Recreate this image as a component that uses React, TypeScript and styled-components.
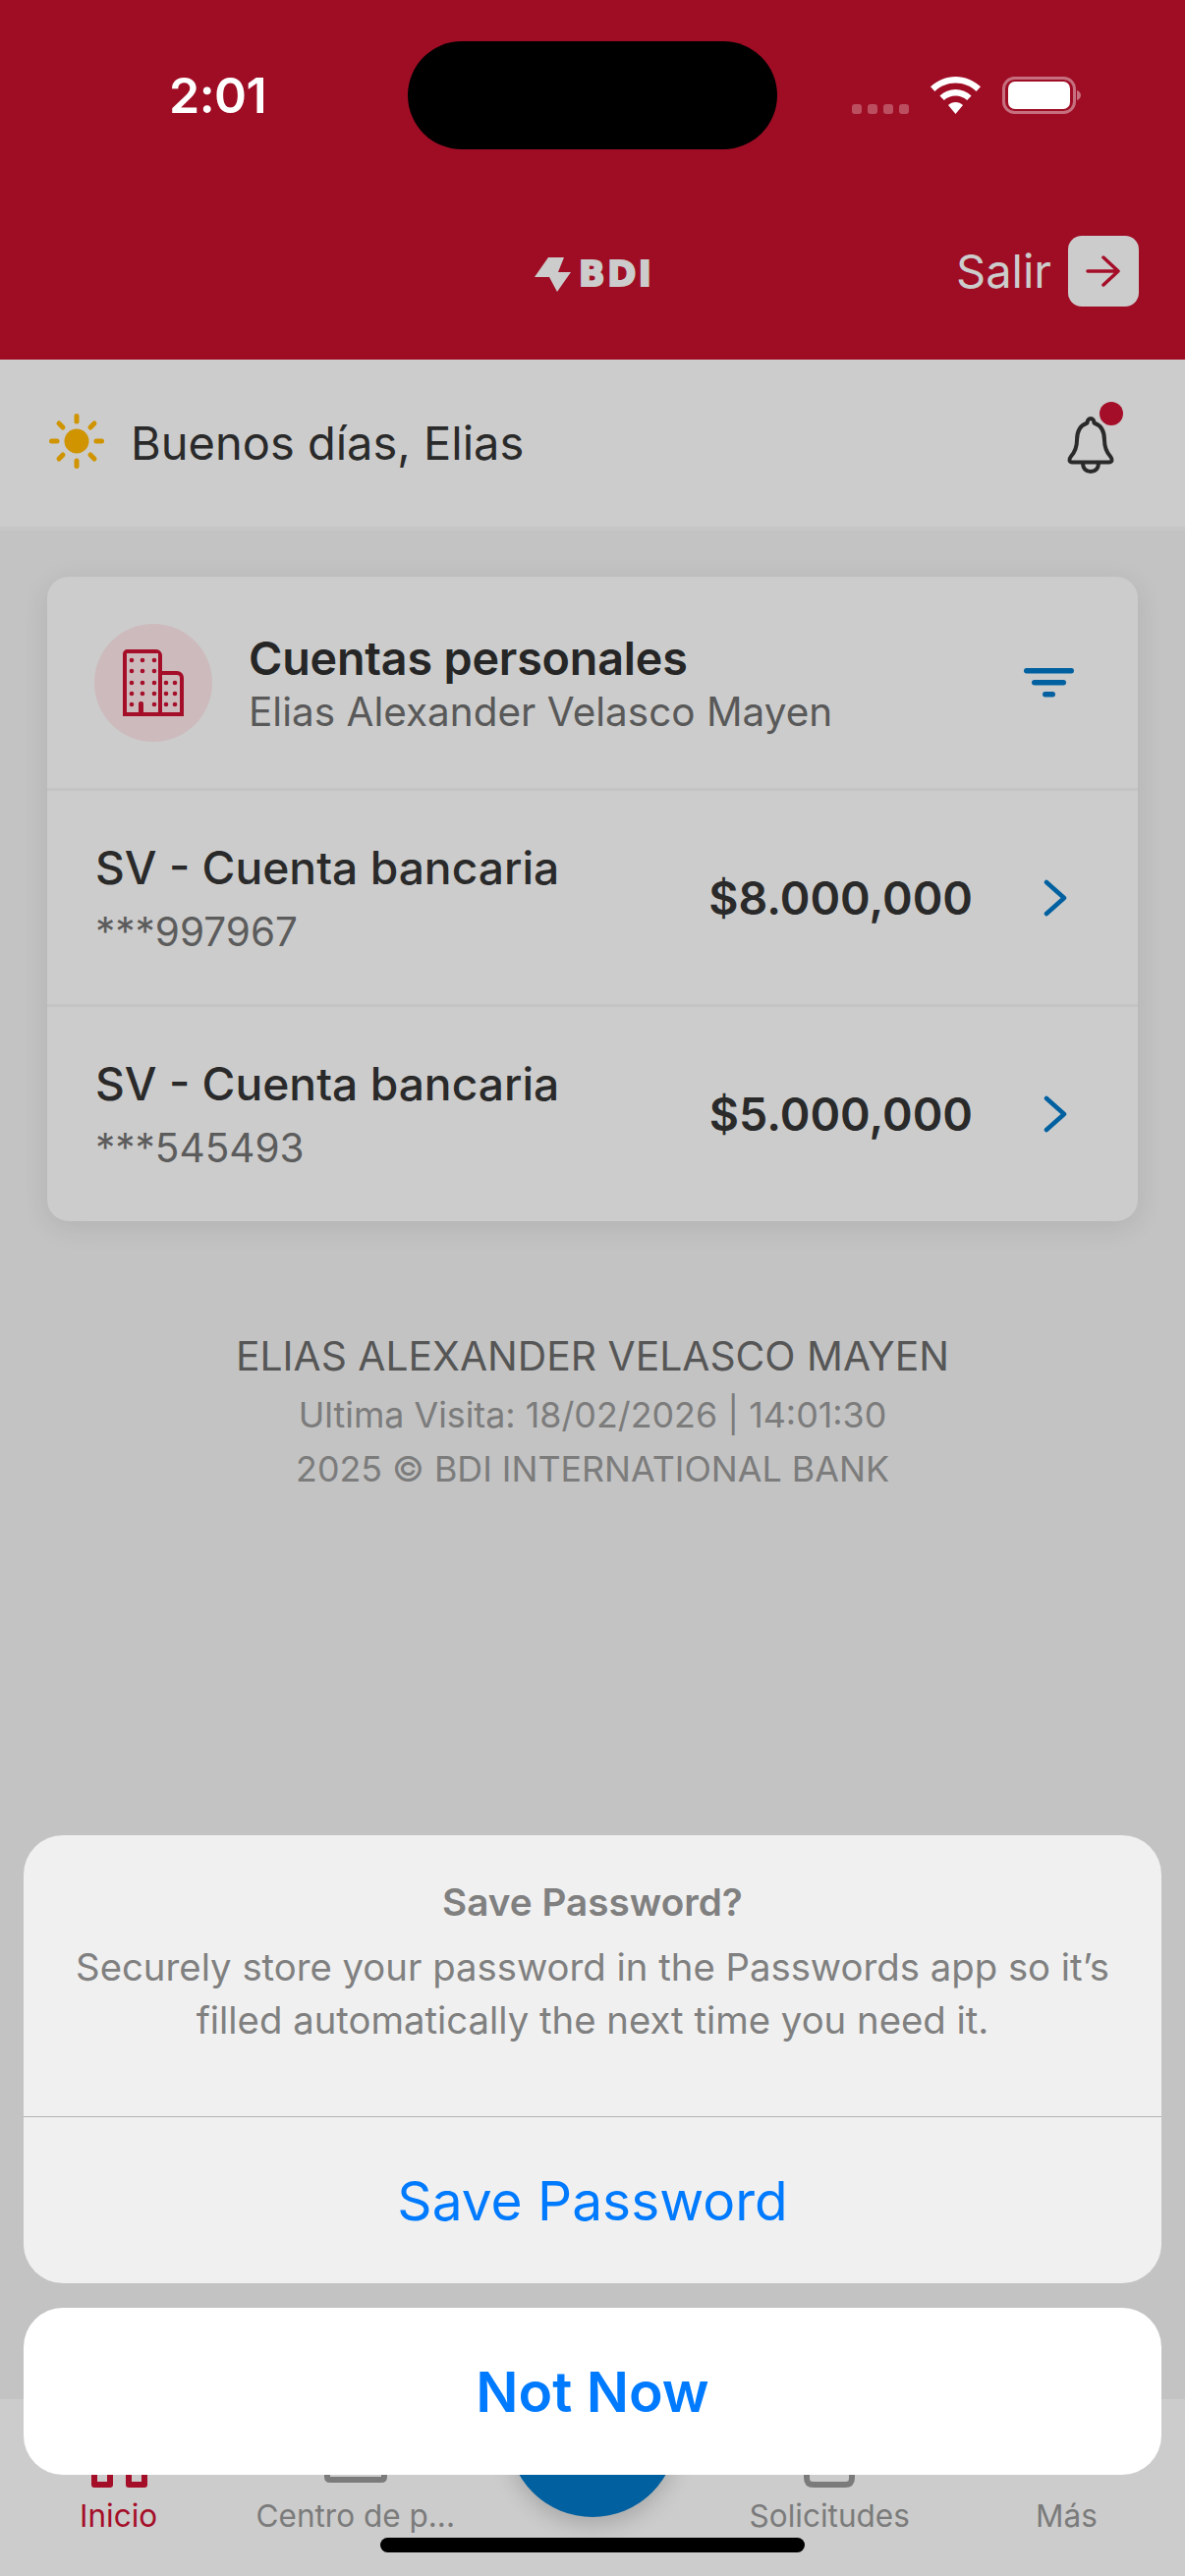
import React from 'react';
import styled, { createGlobalStyle } from 'styled-components';

const GlobalStyle = createGlobalStyle`
  html, body {
    margin: 0;
    padding: 0;
    background: #c3c3c3;
  }
  * {
    box-sizing: border-box;
  }
`;

const Page = styled.div`
  position: relative;
  display: flex;
  flex-direction: column;
  width: 1206px;
  height: 2622px;
  overflow: hidden;
  background: #c3c3c3;
  font-family: Inter, "Liberation Sans", sans-serif;
`;

const Header = styled.header`
  height: 366px;
  flex: none;
  background: #9f0d25;
`;

const StatusBar = styled.div`
  display: flex;
  justify-content: space-between;
  height: 240px;
  padding: 66px 0 0 172px;
`;

const Time = styled.span`
  font-size: 50px;
  line-height: 62px;
  font-weight: 600;
  color: #ffffff;
  letter-spacing: -0.5px;
`;

const Island = styled.div`
  position: absolute;
  left: 415px;
  top: 42px;
  width: 376px;
  height: 110px;
  border-radius: 55px;
  background: #000000;
`;

const StatusIcons = styled.div`
  display: flex;
  align-items: flex-end;
  height: 50px;
  padding-right: 106px;
`;

const SignalDots = styled.div`
  display: flex;
  gap: 6px;
  margin-right: 22px;
`;

const SignalDot = styled.span`
  width: 10px;
  height: 10px;
  border-radius: 3px;
  background: #bb4f60;
`;

const HeaderRow = styled.div`
  position: relative;
  display: flex;
  justify-content: flex-end;
  align-items: center;
  height: 72px;
  padding-right: 47px;
`;

const Logo = styled.div`
  position: absolute;
  left: 544px;
  top: 21px;
  display: flex;
  align-items: center;
  gap: 5px;
  color: #cccccc;
`;

const LogoText = styled.span`
  font-family: "DejaVu Sans", Inter, sans-serif;
  font-size: 35px;
  line-height: 36px;
  font-weight: 700;
  letter-spacing: 2.5px;
  -webkit-text-stroke: 2px #cccccc;
`;

const ExitLabel = styled.span`
  font-size: 47px;
  line-height: 56px;
  color: #cccccc;
  margin-right: 17px;
`;

const ExitButton = styled.div`
  display: flex;
  align-items: center;
  justify-content: center;
  width: 72px;
  height: 72px;
  border-radius: 14px;
  background: #cccccc;
`;

const GreetingBar = styled.div`
  display: flex;
  align-items: center;
  justify-content: space-between;
  flex: none;
  height: 174px;
  padding: 0 66px 4px 50px;
  background: #cccccc;
  border-bottom: 4px solid #c6c6c6;
`;

const Greeting = styled.div`
  display: flex;
  align-items: center;
  gap: 27px;
  font-size: 47px;
  line-height: 62px;
  color: #2a2a2a;
`;

const GreetingText = styled.span`
  position: relative;
  top: 2px;
`;

const BellWrap = styled.div`
  position: relative;
  width: 60px;
  height: 66px;
  display: flex;
  justify-content: center;
  align-items: flex-end;
`;

const BellBadge = styled.span`
  position: absolute;
  top: -7px;
  right: -3px;
  width: 24px;
  height: 24px;
  border-radius: 50%;
  background: #a50e28;
`;

const Card = styled.section`
  flex: none;
  margin: 47px 48px 0;
  border-radius: 22px;
  background: #cccccc;
  box-shadow: 0 6px 28px rgba(0, 0, 0, 0.09);
  overflow: hidden;
`;

const CardHead = styled.div`
  display: flex;
  align-items: center;
  height: 218px;
  padding: 0 65px 0 48px;
  border-bottom: 3px solid #c4c4c4;
`;

const Avatar = styled.div`
  display: flex;
  align-items: center;
  justify-content: center;
  flex: none;
  width: 120px;
  height: 120px;
  border-radius: 50%;
  background: #cdbabd;
  margin-right: 37px;
`;

const HeadText = styled.div`
  flex: 1;
  display: flex;
  flex-direction: column;
  gap: 3px;
  padding-top: 3px;
`;

const HeadTitle = styled.div`
  font-size: 46.700px;
  line-height: 54px;
  font-weight: 600;
  letter-spacing: -0.2px;
  color: #262626;
`;

const HeadSub = styled.div`
  font-size: 40.500px;
  line-height: 50px;
  color: #595959;
`;

const AccountRow = styled.div<{ $last?: boolean }>`
  display: flex;
  align-items: center;
  height: ${p => (p.$last ? 218 : 220)}px;
  padding: 0 72px 0 49px;
  border-bottom: ${p => (p.$last ? 'none' : '3px solid #c4c4c4')};
`;

const AccountText = styled.div`
  flex: 1;
  display: flex;
  flex-direction: column;
  gap: 14px;
`;

const AccountName = styled.div`
  font-size: 46.200px;
  line-height: 56px;
  font-weight: 500;
  color: #2a2a2a;
`;

const AccountNumber = styled.div`
  font-size: 40.500px;
  line-height: 48px;
  color: #5c5c5c;
`;

const Amount = styled.div`
  font-size: 46.500px;
  line-height: 56px;
  font-weight: 600;
  color: #2a2a2a;
  margin-right: 72px;
`;

const Footer = styled.footer`
  flex: none;
  margin-top: 107px;
  text-align: center;
`;

const FooterName = styled.div`
  font-size: 40.800px;
  line-height: 60px;
  margin-bottom: 3px;
  color: #565656;
`;

const FooterLine = styled.div`
  font-size: 35.800px;
  line-height: 55px;
  color: #7c7c7c;
`;

const TabBar = styled.nav`
  position: relative;
  display: grid;
  grid-template-columns: repeat(5, 1fr);
  flex: none;
  height: 180px;
  margin-top: auto;
  background: #cccccc;
`;

const TabItem = styled.div<{ $active?: boolean }>`
  display: flex;
  flex-direction: column;
  align-items: center;
  padding-top: 30px;
  font-size: 31.500px;
  line-height: 40px;
  color: ${p => (p.$active ? '#a50e28' : '#7b7b7b')};

  svg {
    margin-bottom: 9px;
  }
`;

const Fab = styled.div`
  position: absolute;
  left: 517px;
  top: -52px;
  width: 172px;
  height: 172px;
  border-radius: 50%;
  background: #0060a0;
  box-shadow: 0 8px 22px rgba(0, 0, 0, 0.18);
`;

const HomeIndicator = styled.div`
  position: absolute;
  left: 387px;
  top: 2583px;
  width: 432px;
  height: 15px;
  border-radius: 8px;
  background: #000000;
`;

const Sheet = styled.div`
  position: absolute;
  left: 24px;
  right: 24px;
  top: 1868px;
  display: flex;
  flex-direction: column;
  gap: 25px;
`;

const SheetGroup = styled.div`
  border-radius: 40px;
  background: #f0f0f0;
  overflow: hidden;
`;

const SheetHead = styled.div`
  height: 287px;
  padding-top: 45px;
  text-align: center;
  border-bottom: 1px solid #b4b4b4;
`;

const SheetTitle = styled.div`
  font-size: 38.700px;
  line-height: 46px;
  font-weight: 600;
  color: #808080;
  margin-bottom: 16px;
`;

const SheetBody = styled.div`
  font-size: 38.300px;
  line-height: 54px;
  color: #808080;
`;

const SheetAction = styled.div<{ $strong?: boolean }>`
  display: flex;
  align-items: center;
  justify-content: center;
  height: ${p => (p.$strong ? 170 : 169)}px;
  font-size: ${p => (p.$strong ? 57 : 55)}px;
  font-weight: ${p => (p.$strong ? 600 : 400)};
  color: #007aff;
  background: ${p => (p.$strong ? '#ffffff' : 'transparent')};
  border-radius: ${p => (p.$strong ? '40px' : '0')};
`;

const WifiIcon = () => (
  <svg width="51" height="38" viewBox="0 0 51 38" fill="#ffffff" style={{ marginRight: 22 }}>
    <path d="M25.500 0C35 0 44 3.800 51 10.300L46.600 15C40.800 9.600 33.400 6.600 25.500 6.600S10.200 9.600 4.400 15L0 10.300C7 3.800 16 0 25.500 0Z" />
    <path d="M25.500 13C31.600 13 37.200 15.300 41.600 19.400L37.200 24C34 21.100 29.900 19.500 25.500 19.500S17 21.100 13.800 24L9.400 19.400C13.800 15.300 19.400 13 25.500 13Z" />
    <path d="M25.500 26C28.300 26 30.900 27 33 29L25.500 38L18 29C20.100 27 22.700 26 25.500 26Z" />
  </svg>
);

const BatteryIcon = () => (
  <svg width="80" height="38" viewBox="0 0 80 38">
    <rect x="1.500" y="1.500" width="72" height="35" rx="11" fill="none" stroke="#c6707f" strokeWidth="3" />
    <rect x="6" y="5" width="63" height="28" rx="7" fill="#ffffff" />
    <path d="M76 14c2.500.8 4 2.800 4 5s-1.500 4.200-4 5z" fill="#c6707f" />
  </svg>
);

const BoltLogo = () => (
  <svg width="40" height="35" viewBox="0 0 40 35" fill="#cccccc">
    <path d="M14 0H30L24 15H37L23 35L15 20H0Z" />
  </svg>
);

const ExitArrow = () => (
  <svg width="36" height="32" viewBox="0 0 36 32" fill="none" stroke="#a50e28" strokeWidth="3.500" strokeLinecap="round" strokeLinejoin="round">
    <path d="M2 16H33M18 2L33 16L18 30" />
  </svg>
);

const SunIcon = () => (
  <svg width="56" height="56" viewBox="0 0 56 56" fill="none">
    <circle cx="28" cy="28" r="12.500" fill="#cf9400" />
    <g stroke="#cf9400" strokeWidth="5" strokeLinecap="round">
      <path d="M28 2.500V8M28 48V53.500M2.500 28H8M48 28H53.500M10 10L14 14M42 42L46 46M46 10L42 14M14 42L10 46" />
    </g>
  </svg>
);

const BellIcon = () => (
  <svg width="50" height="58" viewBox="0 0 50 58" fill="none" stroke="#2a2a2a" strokeWidth="4" strokeLinejoin="round">
    <path d="M25 2C27 2 28.500 4 28.500 6.500C36 9 39 15 39 24C39 32 41 36 45 40.500C47.500 43.500 47 46.500 43.500 46.500H6.500C3 46.500 2.500 43.500 5 40.500C9 36 11 32 11 24C11 15 14 9 21.500 6.500C21.500 4 23 2 25 2Z" />
    <path d="M17 47C17 53 20.500 56 25 56S33 53 33 47" />
  </svg>
);

const BuildingIcon = () => (
  <svg width="64" height="70" viewBox="0 0 64 70" fill="#a50e28">
    <path fillRule="evenodd" d="M6 1H35C38 1 41 4 41 7V23H56C60 23 63 26 63 30V69H1V6C1 3 3 1 6 1ZM5 5V65H17V56C17 54.500 18.500 54 19.500 54S22 54.500 22 56V65H37V5ZM41 27V65H59V30C59 28 58 27 56 27Z" />
    {[12, 23, 35, 46, 57].flatMap(y =>
      [10, 21, 33].map(x => (y === 57 && x === 21 ? null : <circle key={`${x}-${y}`} cx={x} cy={y} r="2.300" />)),
    )}
    {[35, 46, 57].flatMap(y =>
      [45, 54].map(x => <circle key={`${x}-${y}`} cx={x} cy={y} r="2.300" />),
    )}
  </svg>
);

const FilterIcon = () => (
  <svg width="51" height="30" viewBox="0 0 51 30" fill="#0060a0">
    <rect x="0" y="0" width="51" height="5.500" rx="2.750" />
    <rect x="8" y="12" width="35" height="5.500" rx="2.750" />
    <rect x="19" y="24" width="13" height="5.500" rx="2.750" />
  </svg>
);

const Chevron = () => (
  <svg width="24" height="38" viewBox="0 0 24 38" fill="none" stroke="#0060a0" strokeWidth="4.500" strokeLinecap="round" strokeLinejoin="round">
    <path d="M3 3L21 19L3 35" />
  </svg>
);

const HomeTabIcon = () => (
  <svg width="60" height="60" viewBox="0 0 60 60" fill="none" stroke="#a50e28" strokeWidth="6" strokeLinejoin="round">
    <path d="M5 20H21V57H5ZM40 20H56V57H40Z" />
  </svg>
);

const CenterTabIcon = () => (
  <svg width="64" height="60" viewBox="0 0 64 60" fill="none" stroke="#7b7b7b" strokeWidth="6" strokeLinejoin="round">
    <path d="M3 20V49C3 51 4 52 6 52H58C60 52 61 51 61 49V20" />
  </svg>
);

const RequestsTabIcon = () => (
  <svg width="52" height="60" viewBox="0 0 52 60" fill="none" stroke="#7b7b7b" strokeWidth="6" strokeLinejoin="round">
    <path d="M3 20V50C3 55 5 57 10 57H42C47 57 49 55 49 50V20" />
  </svg>
);

const accounts = [
  { number: '***997967', amount: '$8.000,000' },
  { number: '***545493', amount: '$5.000,000' },
];

const App = () => (
  <Page>
    <GlobalStyle />
    <Header>
      <StatusBar>
        <Time>2:01</Time>
        <StatusIcons>
          <SignalDots>
            {[0, 1, 2, 3].map(i => <SignalDot key={i} />)}
          </SignalDots>
          <WifiIcon />
          <BatteryIcon />
        </StatusIcons>
      </StatusBar>
      <Island />
      <HeaderRow>
        <Logo>
          <BoltLogo />
          <LogoText>BDI</LogoText>
        </Logo>
        <ExitLabel>Salir</ExitLabel>
        <ExitButton>
          <ExitArrow />
        </ExitButton>
      </HeaderRow>
    </Header>

    <GreetingBar>
      <Greeting>
        <SunIcon />
        <GreetingText>Buenos días, Elias</GreetingText>
      </Greeting>
      <BellWrap>
        <BellIcon />
        <BellBadge />
      </BellWrap>
    </GreetingBar>

    <Card>
      <CardHead>
        <Avatar>
          <BuildingIcon />
        </Avatar>
        <HeadText>
          <HeadTitle>Cuentas personales</HeadTitle>
          <HeadSub>Elias Alexander Velasco Mayen</HeadSub>
        </HeadText>
        <FilterIcon />
      </CardHead>
      {accounts.map((account, index) => (
        <AccountRow key={account.number} $last={index === accounts.length - 1}>
          <AccountText>
            <AccountName>SV - Cuenta bancaria</AccountName>
            <AccountNumber>{account.number}</AccountNumber>
          </AccountText>
          <Amount>{account.amount}</Amount>
          <Chevron />
        </AccountRow>
      ))}
    </Card>

    <Footer>
      <FooterName>ELIAS ALEXANDER VELASCO MAYEN</FooterName>
      <FooterLine>Ultima Visita: 18/02/2026 | 14:01:30</FooterLine>
      <FooterLine>2025 © BDI INTERNATIONAL BANK</FooterLine>
    </Footer>

    <TabBar>
      <TabItem $active>
        <HomeTabIcon />
        Inicio
      </TabItem>
      <TabItem>
        <CenterTabIcon />
        Centro de p...
      </TabItem>
      <TabItem />
      <TabItem>
        <RequestsTabIcon />
        Solicitudes
      </TabItem>
      <TabItem>
        <svg width="60" height="60" />
        Más
      </TabItem>
      <Fab />
    </TabBar>

    <Sheet>
      <SheetGroup>
        <SheetHead>
          <SheetTitle>Save Password?</SheetTitle>
          <SheetBody>
            Securely store your password in the Passwords app so it’s
            <br />
            filled automatically the next time you need it.
          </SheetBody>
        </SheetHead>
        <SheetAction>Save Password</SheetAction>
      </SheetGroup>
      <SheetAction $strong>Not Now</SheetAction>
    </Sheet>

    <HomeIndicator />
  </Page>
);

export default App;
